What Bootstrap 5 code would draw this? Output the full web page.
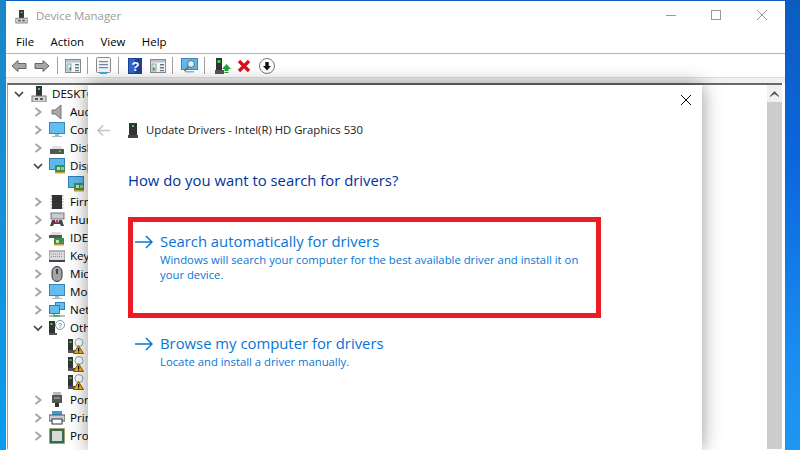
<!DOCTYPE html>
<html lang="en"><head><meta charset="utf-8"><title>Device Manager</title>
<link href="https://cdn.jsdelivr.net/npm/bootstrap@5.3.0/dist/css/bootstrap.min.css" rel="stylesheet">
<style>
html,body{height:450px;overflow:hidden}
body{background:linear-gradient(180deg,#1b86c6 0,#0a9cee 100%) left top/6px 100% no-repeat,linear-gradient(180deg,#0d5cc0 0,#0a66dc 35%,#1a8ef0 80%,#1e96f2 100%);font-family:"Open Sans","Liberation Sans",sans-serif;font-size:11.3px;color:#000;position:relative}
.app-win{position:absolute;left:6px;top:1px;width:779px;height:449px;background:#fff;overflow:hidden}
.title-bar{height:30px;padding-left:9px;color:#999;font-size:11.4px}
.title-bar .ttl{margin-left:8px}
.win-btns{margin-left:auto;display:block}
.menu-bar{height:23px;padding-left:10px;gap:16.5px;border-bottom:1px solid #b4b4bc;font-size:11.4px}
.tool-bar{height:23px;padding-left:5px}
.tool-bar svg{display:block;flex:none}
.tsep{width:1px;height:17px;background:#a0a0a0;flex:none}
.g6{margin-left:6px}.g7{margin-left:7px}.g8{margin-left:8px}.g9{margin-left:9px}.g10{margin-left:10px}
.tool-gap{height:6px;background:#f0f0f0;border-top:1px solid #dedede}
.tree-area{height:366px;margin-left:1px;margin-right:3px;border-top:2px solid #696969;border-left:1px solid #a0a0a0}
.tree{flex:1;min-width:0}
.tree-row{height:18px;white-space:nowrap;font-size:11.6px}
.tw{width:10px;flex:none;display:block}
.tree-row svg.ic{flex:none;display:block}
.lv0{padding-left:6px}.lv0 .tw{margin-right:7px}.lv0 .ic{margin-right:5px}
.lv1{padding-left:25px}.lv1 .tw{margin-right:6px}.lv1 .ic{margin-right:5px}
.lv2{padding-left:60px}
.sbar{width:15px;flex:none;background:#f0f0f0}
.sbtn{height:17px;background:#f0f0f0}
.sthumb{flex:1;background:#cdcdcd}
.wiz{position:absolute;left:88px;top:85px;width:614px;height:365px;background:#fff;box-shadow:0 0 18px rgba(0,0,0,.42);padding-left:40px}
.wiz-close{position:absolute;right:10px;top:9px;display:block}
.wiz-head{height:20px;padding-top:35px;box-sizing:content-box;margin-left:-31px;font-size:11.3px;color:#1a1a1a}
.wiz-head svg{display:block;flex:none}
.wh-ic{margin-left:18px;margin-right:8px}
.wiz-q{margin:29px 0 0 0;font-size:14.85px;line-height:22px;color:#003399;font-weight:400}
.opt{width:473px;height:101px;margin-top:26px;border:5px solid #ed1c24;padding:9px 0 0 2px}
.opt-plain{border-color:transparent;margin-top:0;padding-top:10px;height:auto}
.arrow{flex:none;display:block;margin-top:4px;margin-right:7px}
.opt-t{font-size:14.85px;line-height:20px;color:#0675d6}
.opt-d{font-size:11.3px;line-height:15px;color:#0675d6;margin-top:1px;width:425px}
</style></head>
<body>
<svg width="0" height="0" class="position-absolute">
<defs>
<symbol id="pc" viewBox="0 0 16 16"><rect x="5" y="0" width="6" height="10" fill="#333"/><rect x="7" y="2" width="2" height="2" fill="#3d4"/><rect x="1" y="10" width="14" height="6" fill="#d6d6d6" stroke="#777"/><rect x="4" y="12" width="3" height="2" fill="#555"/><rect x="9" y="12" width="3" height="2" fill="#555"/></symbol>
<symbol id="disp" viewBox="0 0 16 16"><rect x=".5" y=".5" width="15" height="11" fill="#5cb8ee" stroke="#2f7db5"/><rect x="6" y="7" width="10" height="8" fill="#3c8f4e"/><rect x="8" y="9" width="3" height="3" fill="#bfe3b8"/><rect x="12" y="9" width="3" height="3" fill="#8cc98a"/><rect x="6" y="14" width="10" height="1.500" fill="#d0a040"/></symbol>
<symbol id="warnpc" viewBox="0 0 16 16"><rect x="0" y="1" width="5" height="11" fill="#333"/><rect x="1.500" y="3" width="2" height="2" fill="#3d4"/><rect x="0" y="12" width="7" height="3" fill="#555"/><circle cx="11" cy="4.500" r="4" fill="#fff" stroke="#8aa"/><path d="M10.500 7.500 15.500 15.500H5.500Z" fill="#f0b020" stroke="#8a5a00"/><rect x="10" y="10" width="1.200" height="3" fill="#000"/><rect x="10" y="13.500" width="1.200" height="1" fill="#000"/></symbol>
<symbol id="toolwin" viewBox="0 0 16 16"><rect x=".5" y="1.500" width="15" height="13" fill="#f6f6f6" stroke="#8a8a8a"/><rect x="1" y="2" width="14" height="2.500" fill="#b8c4d0"/><rect x="2" y="6" width="4" height="7" fill="#dfe7ee" stroke="#8aa"/><rect x="10" y="6" width="4" height="1.500" fill="#678"/><rect x="10" y="9" width="4" height="1.500" fill="#678"/><rect x="10" y="12" width="4" height="1.200" fill="#678"/></symbol>
<symbol id="cl" viewBox="0 0 10 10"><path d="M2.500 1 7.500 5 2.500 9" fill="none" stroke="#a6a6a6" stroke-width="2"/></symbol>
<symbol id="ex" viewBox="0 0 10 10"><path d="M1 3 5 7 9 3" fill="none" stroke="#444" stroke-width="1.700"/></symbol>
<symbol id="scr" viewBox="0 0 16 16"><rect x=".5" y=".5" width="15" height="11" fill="#63bdf0" stroke="#3a86bb"/><rect x="6" y="12" width="4" height="2" fill="#a8bac6"/><rect x="3" y="14" width="10" height="1" fill="#a8bac6"/></symbol>
</defs>
</svg>
<div class="app-win d-flex flex-column">
  <div class="title-bar d-flex align-items-center">
    <svg width="13" height="15" class="d-block"><use href="#pc"/></svg>
    <span class="ttl">Device Manager</span>
    <svg class="win-btns" width="122" height="30"><path d="M3 14.500H13" stroke="#999"/><rect x="48.500" y="9.500" width="9" height="9" fill="none" stroke="#999"/><path d="M104 9 94 19M94 9 104 19" stroke="#999" fill="none"/></svg>
  </div>
  <div class="menu-bar d-flex align-items-center"><span>File</span><span>Action</span><span>View</span><span>Help</span></div>
  <div class="tool-bar d-flex align-items-center">
    <svg width="16" height="16"><path d="M1 8 7 2.500V5.500H15V10.500H7V13.500Z" fill="#a6a6a6" stroke="#666"/></svg>
    <svg width="16" height="16" class="g7"><path d="M15 8 9 2.500V5.500H1V10.500H9V13.500Z" fill="#a6a6a6" stroke="#666"/></svg>
    <span class="tsep g7"></span>
    <svg width="16" height="16" class="g7"><use href="#toolwin"/><path d="M6 9 3.500 10.700 6 12.500Z" fill="#2a9a3a"/></svg>
    <span class="tsep g6"></span>
    <svg width="15" height="17" class="g8"><rect x=".5" y=".5" width="14" height="15" rx="1" fill="#f2f4f6" stroke="#8a8a8a"/><rect x="3" y="4" width="9" height="1.200" fill="#6d87a0"/><rect x="3" y="7" width="9" height="1.200" fill="#6d87a0"/><rect x="3" y="10" width="9" height="1.200" fill="#6d87a0"/><rect x="4" y="15" width="7" height="2" fill="#3ba7e8"/></svg>
    <span class="tsep g7"></span>
    <svg width="14" height="16" class="g9"><rect width="14" height="16" fill="#1c3f9e"/><rect x="1" y="1" width="6" height="14" fill="#3564c8"/><text x="3.500" y="13" font-family="Liberation Sans" font-weight="700" font-size="13" fill="#fff">?</text></svg>
    <svg width="16" height="16" class="g8"><use href="#toolwin"/><path d="M3 9 5.500 10.700 3 12.500Z" fill="#2a9a3a"/></svg>
    <span class="tsep g6"></span>
    <svg width="17" height="17" class="g8"><rect x=".5" y="1.500" width="16" height="11" fill="#5fb9ee" stroke="#3a86bb"/><rect x="4" y="14" width="9" height="1.500" fill="#9fb4c2"/><circle cx="10" cy="7" r="3.500" fill="#d9eef9" stroke="#5a6a75"/><path d="M7.500 9.500 3.500 14" stroke="#7a6a50" stroke-width="1.500"/></svg>
    <span class="tsep g6"></span>
    <svg width="16" height="16" class="g10"><rect x="1" y="0" width="6" height="12" fill="#333"/><rect x="2.500" y="2" width="3" height="3" fill="#3d4"/><rect x="0" y="12" width="9" height="4" fill="#555"/><path d="M11.500 6 16 11H13.500V13H9.500V11H7Z" fill="#1fa33a"/><rect x="9.500" y="14" width="4" height="1" fill="#1fa33a"/></svg>
    <svg width="14" height="14" class="g6"><path d="M2 2 12 12M12 2 2 12" stroke="#d8101c" stroke-width="3.200"/></svg>
    <svg width="16" height="16" class="g8"><circle cx="8" cy="8" r="7.500" fill="#fff" stroke="#777"/><path d="M8 12.500 4 8H6.300V4H9.700V8H12Z" fill="#111"/></svg>
  </div>
  <div class="tool-gap"></div>
  <div class="tree-area d-flex">
    <div class="tree">
      <div class="tree-row lv0 d-flex align-items-center"><svg class="tw" width="10" height="10"><use href="#ex"/></svg><svg class="ic" width="16" height="16"><use href="#pc"/></svg>DESKTOP</div>
      <div class="tree-row lv1 d-flex align-items-center"><svg class="tw" width="10" height="10"><use href="#cl"/></svg><svg class="ic" width="16" height="16"><path d="M3 6H6L12 1V15L6 10H3Z" fill="#a8a8a8" stroke="#777"/></svg>Audio</div>
      <div class="tree-row lv1 d-flex align-items-center"><svg class="tw" width="10" height="10"><use href="#cl"/></svg><svg class="ic" width="16" height="16"><use href="#scr"/></svg>Computer</div>
      <div class="tree-row lv1 d-flex align-items-center"><svg class="tw" width="10" height="10"><use href="#cl"/></svg><svg class="ic" width="16" height="16"><path d="M2 9 4 6H12L14 9Z" fill="#e0e0e0"/><rect x="1" y="9" width="14" height="5" fill="#555"/><rect x="10" y="10.500" width="2" height="1.500" fill="#3d4"/></svg>Disk drives</div>
      <div class="tree-row lv1 d-flex align-items-center"><svg class="tw" width="10" height="10"><use href="#ex"/></svg><svg class="ic" width="16" height="16"><use href="#disp"/></svg>Display adapters</div>
      <div class="tree-row lv2 d-flex align-items-center"><svg class="ic" width="16" height="16"><use href="#disp"/></svg></div>
      <div class="tree-row lv1 d-flex align-items-center"><svg class="tw" width="10" height="10"><use href="#cl"/></svg><svg class="ic" width="16" height="16"><rect x="3" y="1" width="10" height="14" fill="#333"/><path d="M1.500 2H3M1.500 5H3M1.500 8H3M1.500 11H3M1.500 14H3M13 2H14.500M13 5H14.500M13 8H14.500M13 11H14.500M13 14H14.500" stroke="#999"/></svg>Firmware</div>
      <div class="tree-row lv1 d-flex align-items-center"><svg class="tw" width="10" height="10"><use href="#cl"/></svg><svg class="ic" width="16" height="16"><rect x="2" y="1" width="13" height="6" fill="#c8ccd2" stroke="#777"/><path d="M1 14 3 8H6L7 11H9L10 8H13L15 14H12L11 12H5L4 14Z" fill="#445"/><rect x="7" y="8" width="2" height="3" fill="#d33"/></svg>Human</div>
      <div class="tree-row lv1 d-flex align-items-center"><svg class="tw" width="10" height="10"><use href="#cl"/></svg><svg class="ic" width="16" height="16"><path d="M1 5 3 2H11L13 5Z" fill="#ddd"/><rect x="0" y="5" width="13" height="3" fill="#555"/><rect x="5" y="8" width="10" height="7" fill="#3c8f4e"/><rect x="7" y="10" width="3" height="3" fill="#bfe3b8"/><rect x="5" y="14" width="10" height="1.500" fill="#d0a040"/></svg>IDE ATA/ATAPI</div>
      <div class="tree-row lv1 d-flex align-items-center"><svg class="tw" width="10" height="10"><use href="#cl"/></svg><svg class="ic" width="16" height="16"><rect x="0" y="3" width="16" height="10" fill="#d8dce2" stroke="#777"/><path d="M2 6H14M2 8.500H14" stroke="#8a8f98" stroke-dasharray="1 1"/><rect x="0" y="12" width="16" height="2" fill="#444"/></svg>Keyboards</div>
      <div class="tree-row lv1 d-flex align-items-center"><svg class="tw" width="10" height="10"><use href="#cl"/></svg><svg class="ic" width="16" height="16"><rect x="3" y="0.500" width="10" height="15" rx="5" fill="#a0a4a8" stroke="#333"/><rect x="7" y="3" width="2" height="5" fill="#444"/></svg>Mice</div>
      <div class="tree-row lv1 d-flex align-items-center"><svg class="tw" width="10" height="10"><use href="#cl"/></svg><svg class="ic" width="16" height="16"><use href="#scr"/></svg>Monitors</div>
      <div class="tree-row lv1 d-flex align-items-center"><svg class="tw" width="10" height="10"><use href="#cl"/></svg><svg class="ic" width="16" height="16"><rect x="6.500" y=".5" width="9" height="7" fill="#63bdf0" stroke="#2f7db5"/><rect x=".5" y="3.500" width="10" height="8" fill="#63bdf0" stroke="#2f7db5"/><rect x="0" y="13" width="16" height="2" fill="#bbb"/><path d="M5 12V14H11" stroke="#2fb54a" stroke-width="1.500" fill="none"/></svg>Network adapters</div>
      <div class="tree-row lv1 d-flex align-items-center"><svg class="tw" width="10" height="10"><use href="#ex"/></svg><svg class="ic" width="16" height="16"><rect x="0" y="1" width="6" height="12" fill="#333"/><rect x="1.500" y="3" width="2" height="2" fill="#3d4"/><rect x="0" y="13" width="8" height="2" fill="#555"/><circle cx="11" cy="5" r="4.500" fill="#fff" stroke="#7a9ab0"/><text x="9" y="8" font-size="7" fill="#2a6a9a" font-family="Liberation Sans">?</text></svg>Other devices</div>
      <div class="tree-row lv2 d-flex align-items-center"><svg class="ic" width="16" height="16"><use href="#warnpc"/></svg></div>
      <div class="tree-row lv2 d-flex align-items-center"><svg class="ic" width="16" height="16"><use href="#warnpc"/></svg></div>
      <div class="tree-row lv2 d-flex align-items-center"><svg class="ic" width="16" height="16"><use href="#warnpc"/></svg></div>
      <div class="tree-row lv1 d-flex align-items-center"><svg class="tw" width="10" height="10"><use href="#cl"/></svg><svg class="ic" width="16" height="16"><rect x="4" y="0" width="8" height="3" fill="#bbb"/><rect x="3" y="3" width="10" height="8" fill="#555"/><rect x="5" y="5.500" width="6" height="1" fill="#bbb"/><rect x="6" y="11" width="4" height="4" fill="#333"/></svg>Ports</div>
      <div class="tree-row lv1 d-flex align-items-center"><svg class="tw" width="10" height="10"><use href="#cl"/></svg><svg class="ic" width="16" height="16"><rect x="3" y="1" width="10" height="4" fill="#3a9ad8"/><rect x="0" y="5" width="16" height="6" fill="#c8ccd2" stroke="#555"/><rect x="3" y="9" width="10" height="5" fill="#fff" stroke="#333"/></svg>Print queues</div>
      <div class="tree-row lv1 d-flex align-items-center"><svg class="tw" width="10" height="10"><use href="#cl"/></svg><svg class="ic" width="16" height="16"><rect x=".5" y=".5" width="15" height="15" fill="#3a6a4a" stroke="#a08a40" stroke-dasharray="1 1"/><rect x="3" y="3" width="10" height="10" fill="#d8dcd8"/></svg>Processors</div>
    </div>
    <div class="sbar d-flex flex-column">
      <div class="sbtn d-flex align-items-center justify-content-center"><svg width="9" height="7"><path d="M0 6 4.500 1 9 6V7L4.500 4 0 7Z" fill="#555"/></svg></div>
      <div class="sthumb"></div>
    </div>
  </div>
</div>
<div class="wiz">
  <svg class="wiz-close" width="12" height="12"><path d="M1 1 11 11M11 1 1 11" stroke="#000" fill="none"/></svg>
  <div class="wiz-head d-flex align-items-center">
    <svg width="13" height="11"><path d="M6 .5 1 5.500 6 10.500M1 5.500H13" fill="none" stroke="#c4c4c4" stroke-width="1.600"/></svg>
    <svg width="10" height="15" class="wh-ic"><rect x="1" y="0" width="8" height="12" fill="#333"/><rect x="4" y="2" width="2" height="2" fill="#3d4"/><rect x="0" y="12" width="10" height="3" fill="#444"/></svg>
    <span>Update Drivers - Intel(R) HD Graphics 530</span>
  </div>
  <h1 class="wiz-q">How do you want to search for drivers?</h1>
  <div class="opt d-flex">
    <svg class="arrow" width="18" height="14"><path d="M11 1 17 7 11 13M17 7H0" fill="none" stroke="#0a78d4" stroke-width="1.500"/></svg>
    <div><div class="opt-t">Search automatically for drivers</div><div class="opt-d">Windows will search your computer for the best available driver and install it on your device.</div></div>
  </div>
  <div class="opt opt-plain d-flex">
    <svg class="arrow" width="18" height="14"><path d="M11 1 17 7 11 13M17 7H0" fill="none" stroke="#0a78d4" stroke-width="1.500"/></svg>
    <div><div class="opt-t">Browse my computer for drivers</div><div class="opt-d">Locate and install a driver manually.</div></div>
  </div>
</div>
</body></html>
